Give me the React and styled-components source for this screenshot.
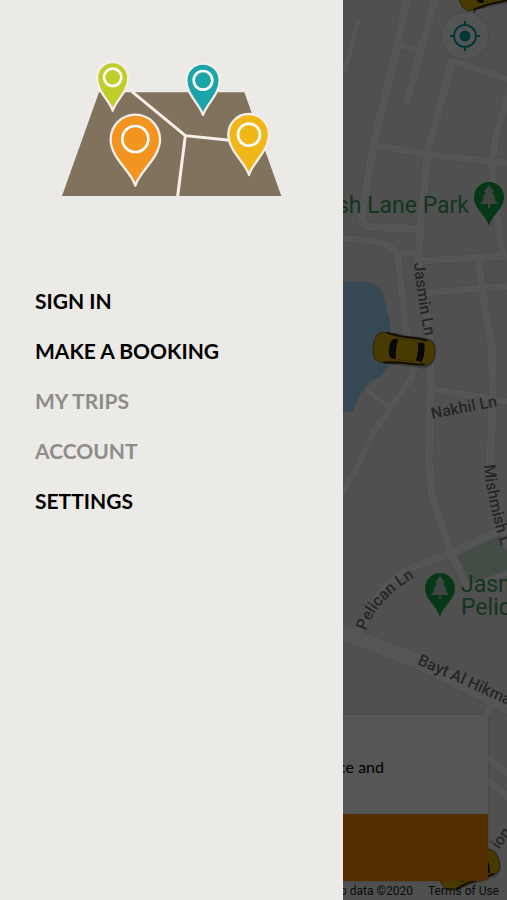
import React from "react";
import styled, { createGlobalStyle } from "styled-components";

const GlobalStyle = createGlobalStyle`
* {
  box-sizing: border-box;
}
body {
  margin: 0;
  background: #ebebeb;
  font-family: Lato, sans-serif;
}
`;

const Screen = styled.div`
position: relative;
display: flex;
flex-direction: column;
min-height: 100vh;
overflow: hidden;
`;

const MapCanvas = styled.svg`
position: absolute;
top: 0;
left: 0;
width: 100%;
height: 100%;
font-family: Roboto, sans-serif;
`;

const TopBar = styled.header`
position: relative;
display: flex;
flex: 1;
align-items: flex-start;
justify-content: flex-end;
padding: 13px 19px;
`;

const LocateButton = styled.button`
display: flex;
align-items: center;
justify-content: center;
width: 46px;
height: 46px;
padding: 0;
border: none;
border-radius: 50%;
background: #f4f8fa;
box-shadow: 0 0 3px rgba(0, 0, 0, 0.15);
`;

const BookingCard = styled.section`
position: relative;
margin: 0 19px;
border-radius: 4px;
overflow: hidden;
background: #fbfbfb;
box-shadow: 0 0 3px rgba(0, 0, 0, 0.2);
`;

const CardText = styled.p`
margin: 0;
padding: 40px 104px 35px;
font-size: 16px;
line-height: 24px;
text-align: right;
color: #000;
`;

const BookButton = styled.button`
display: block;
width: 100%;
height: 67px;
border: none;
background: #f28a00;
`;

const Attribution = styled.footer`
position: relative;
display: flex;
justify-content: flex-end;
gap: 15px;
padding: 1px 8px 0;
font-family: Roboto, sans-serif;
font-size: 12px;
line-height: 18px;
color: #222;
`;

const TermsLink = styled.a`
color: inherit;
text-decoration: none;
`;

const Scrim = styled.div`
position: absolute;
inset: 0;
background: rgba(0, 0, 0, 0.66);
`;

const Drawer = styled.aside`
position: absolute;
top: 0;
bottom: 0;
left: 0;
width: calc(100% - 164px);
padding: 61px 35px;
background: #ebeae6;
`;

const Logo = styled.svg`
display: block;
width: 220px;
height: 137px;
margin: 0 auto 78px;
`;

const Menu = styled.nav`
display: flex;
flex-direction: column;
align-items: flex-start;
`;

const MenuItem = styled.button`
padding: 0;
border: none;
background: none;
font-family: Lato, sans-serif;
font-size: 21px;
font-weight: 700;
line-height: 50px;
color: #000;
cursor: pointer;

&:disabled {
  color: #8e8d8a;
  cursor: default;
}
`;

const menu = [
  { label: "SIGN IN" },
  { label: "MAKE A BOOKING" },
  { label: "MY TRIPS", disabled: true },
  { label: "ACCOUNT", disabled: true },
  { label: "SETTINGS" }
];

const roads = [
  { d: "M358 20L345 70", w: 5 },
  { d: "M408 -4L394 60L374 143L362 213Q361 227 372 227L418 229", w: 8 },
  { d: "M400 45L420 51", w: 6 },
  { d: "M436 -4L407 100", w: 8 },
  { d: "M452 62L428 150L420 230L418 262Q427 310 430 347L431 387L429 460L432 497L453 557L467 586", w: 8 },
  { d: "M453 61L510 80", w: 7 },
  { d: "M374 145L430 155L510 163", w: 7 },
  { d: "M509 90L495 140L492 167L500 240L504 257", w: 7 },
  { d: "M340 238L373 241Q396 245 398 258L406 330Q417 365 412 377L393 405L373 433L357 468L340 495", w: 7 },
  { d: "M397 254L418 252", w: 6 },
  { d: "M418 261L504 256", w: 7 },
  { d: "M423 293L510 286", w: 7 },
  { d: "M478 260L483 297L492 347L493 397L489 480L507 545", w: 8 },
  { d: "M433 389L510 402", w: 7 },
  { d: "M367 390L390 408", w: 5 },
  { d: "M510 526L450 553L407 570Q375 590 358 634", w: 8 },
  { d: "M467 588L510 572", w: 5 },
  { d: "M336 630L420 662L510 707", w: 15 },
  { d: "M492 704L482 724", w: 7 },
  { d: "M484 755L512 777", w: 7 },
  { d: "M484 777L512 800", w: 7 }
];

const Taxi = ({ x, y, angle }) => (
  <g transform={`translate(${x} ${y}) rotate(${angle})`}>
    <rect x="-31" y="-15" width="63" height="31" rx="12" fill="#000" opacity="0.2" />
    <path
      d="M-23 -15H-9L0 -13H22Q31 -12 31 0T22 13H0L-9 15H-23Q-31 13 -31 0T-23 -15Z"
      fill="#d5ab04"
      stroke="#8a7418"
      strokeWidth="1"
    />
    <path d="M-19 -15L-6 -13H14L22 -12M-19 15L-6 13H14L22 12" stroke="#33290a" strokeWidth="2" fill="none" />
    <path d="M-7 -10Q-12 -11 -14 -7Q-16 0 -14 7Q-12 11 -7 10Q-9 0 -7 -10Z" fill="#161616" />
    <path d="M13 -9L19 -10Q22 0 19 10L13 9Q15 0 13 -9Z" fill="#161616" />
    <path d="M-6 -10H12M-6 10H12" stroke="#a08512" strokeWidth="1" />
  </g>
);

const ParkPin = ({ x, y }) => (
  <g transform={`translate(${x} ${y})`}>
    <path d="M0 29C-3 18 -15 12 -15 0A15 15 0 0 1 15 0C15 12 3 18 0 29Z" fill="#12a546" />
    <path d="M0 -12L5 -5H3L7 2H5L9 7H1V11H-1V7H-9L-5 2H-7L-3 -5H-5Z" fill="#bdc9c0" />
  </g>
);

const CityMap = () => (
  <MapCanvas viewBox="0 0 507 900" preserveAspectRatio="xMaxYMid slice" aria-hidden="true">
    <defs>
      <path id="jasmin" d="M414 263Q417 300 426 340" />
      <path id="mishmish" d="M484 465Q488 510 506 560" />
      <path id="pelican" d="M366 631Q376 600 415 577" />
      <path id="bayt" d="M417 664Q460 683 525 713" />
    </defs>
    <rect width="507" height="900" fill="#e9e9e9" />
    <path d="M330 282H370Q381 286 384 297L390 323V363Q386 375 370 382Q360 391 353 411L330 414Z" fill="#9cd3f6" />
    <path d="M457 557L497 537L510 534V570L467 584Z" fill="#c3e0cb" />
    <g fill="none" strokeLinejoin="round" strokeLinecap="round">
      {roads.map(road => (
        <path key={road.d} d={road.d} stroke="#dedede" strokeWidth={road.w + 2} />
      ))}
      {roads.map(road => (
        <path key={road.d} d={road.d} stroke="#fafafa" strokeWidth={road.w} />
      ))}
    </g>
    <g fill="#717171" stroke="#f0f0f0" strokeWidth="1" paintOrder="stroke" fontSize="16" fontWeight="500">
      <text><textPath href="#jasmin">Jasmin Ln</textPath></text>
      <text><textPath href="#mishmish">Mishmish L</textPath></text>
      <text><textPath href="#pelican">Pelican Ln</textPath></text>
      <text><textPath href="#bayt">Bayt Al Hikma</textPath></text>
      <text transform="translate(432 419) rotate(-11)">Nakhil Ln</text>
      <text transform="translate(499 850) rotate(-55)">ion,</text>
      <text transform="translate(467 11) rotate(14)">n</text>
    </g>
    <g fill="#3c9a5e" fontSize="23">
      <text x="469" y="213" textAnchor="end">sh Lane Park</text>
      <text x="461" y="592">Jasm</text>
      <text x="461" y="615">Pelic</text>
    </g>
    <ParkPin x={489} y={197} />
    <ParkPin x={440} y={588} />
    <Taxi x={404} y={350} angle={7} />
    <Taxi x={489} y={-9} angle={-12} />
    <Taxi x={469} y={869} angle={-18} />
  </MapCanvas>
);

const LocateIcon = () => (
  <svg width="30" height="30" viewBox="0 0 30 30" fill="none" stroke="#0f9c9c" strokeWidth="2">
    <circle cx="15" cy="15" r="11" />
    <circle cx="15" cy="15" r="5.5" fill="#0f9c9c" stroke="none" />
    <path d="M15 0V5M15 25V30M0 15H5M25 15H30" />
  </svg>
);

const MapLogo = () => (
  <Logo viewBox="37 33 660 411" aria-hidden="true">
    <path d="M148 127H584L695 438H37Z" fill="#80725c" />
    <path d="M247 125L407 257L540 271M407 257L384 438" fill="none" stroke="#f8efe9" strokeWidth="9" />
    <g stroke="#f6eeea" strokeWidth="7" strokeLinejoin="round">
      <path d="M189 182C181 153 142 125 142 83A47 47 0 0 1 236 83C236 125 197 153 189 182Z" fill="#bfce28" />
      <path d="M460 195C450 163 410 133 410 91A50 50 0 0 1 510 91C510 133 470 163 460 195Z" fill="#1ba5a8" />
      <path d="M257 407C245 362 183 326 183 268A74 74 0 0 1 331 268C331 326 269 362 257 407Z" fill="#f39320" />
      <path d="M598 375C588 338 536 303 536 253A61 61 0 0 1 658 253C658 303 608 338 598 375Z" fill="#f1b719" />
    </g>
    <g fill="none" stroke="#fff" strokeWidth="8">
      <circle cx="189" cy="82" r="26" />
      <circle cx="460" cy="91" r="28" />
      <circle cx="257" cy="267" r="39" />
      <circle cx="598" cy="254" r="33" />
    </g>
  </Logo>
);

const App = () => (
  <>
    <GlobalStyle />
    <Screen>
      <CityMap />
      <TopBar>
        <LocateButton aria-label="My location">
          <LocateIcon />
        </LocateButton>
      </TopBar>
      <BookingCard>
        <CardText>ce and</CardText>
        <BookButton aria-label="Book" />
      </BookingCard>
      <Attribution>
        <span>p data ©2020</span>
        <TermsLink href="#terms">Terms of Use</TermsLink>
      </Attribution>
      <Scrim />
      <Drawer>
        <MapLogo />
        <Menu>
          {menu.map(item => (
            <MenuItem key={item.label} disabled={item.disabled}>
              {item.label}
            </MenuItem>
          ))}
        </Menu>
      </Drawer>
    </Screen>
  </>
);

export default App;
